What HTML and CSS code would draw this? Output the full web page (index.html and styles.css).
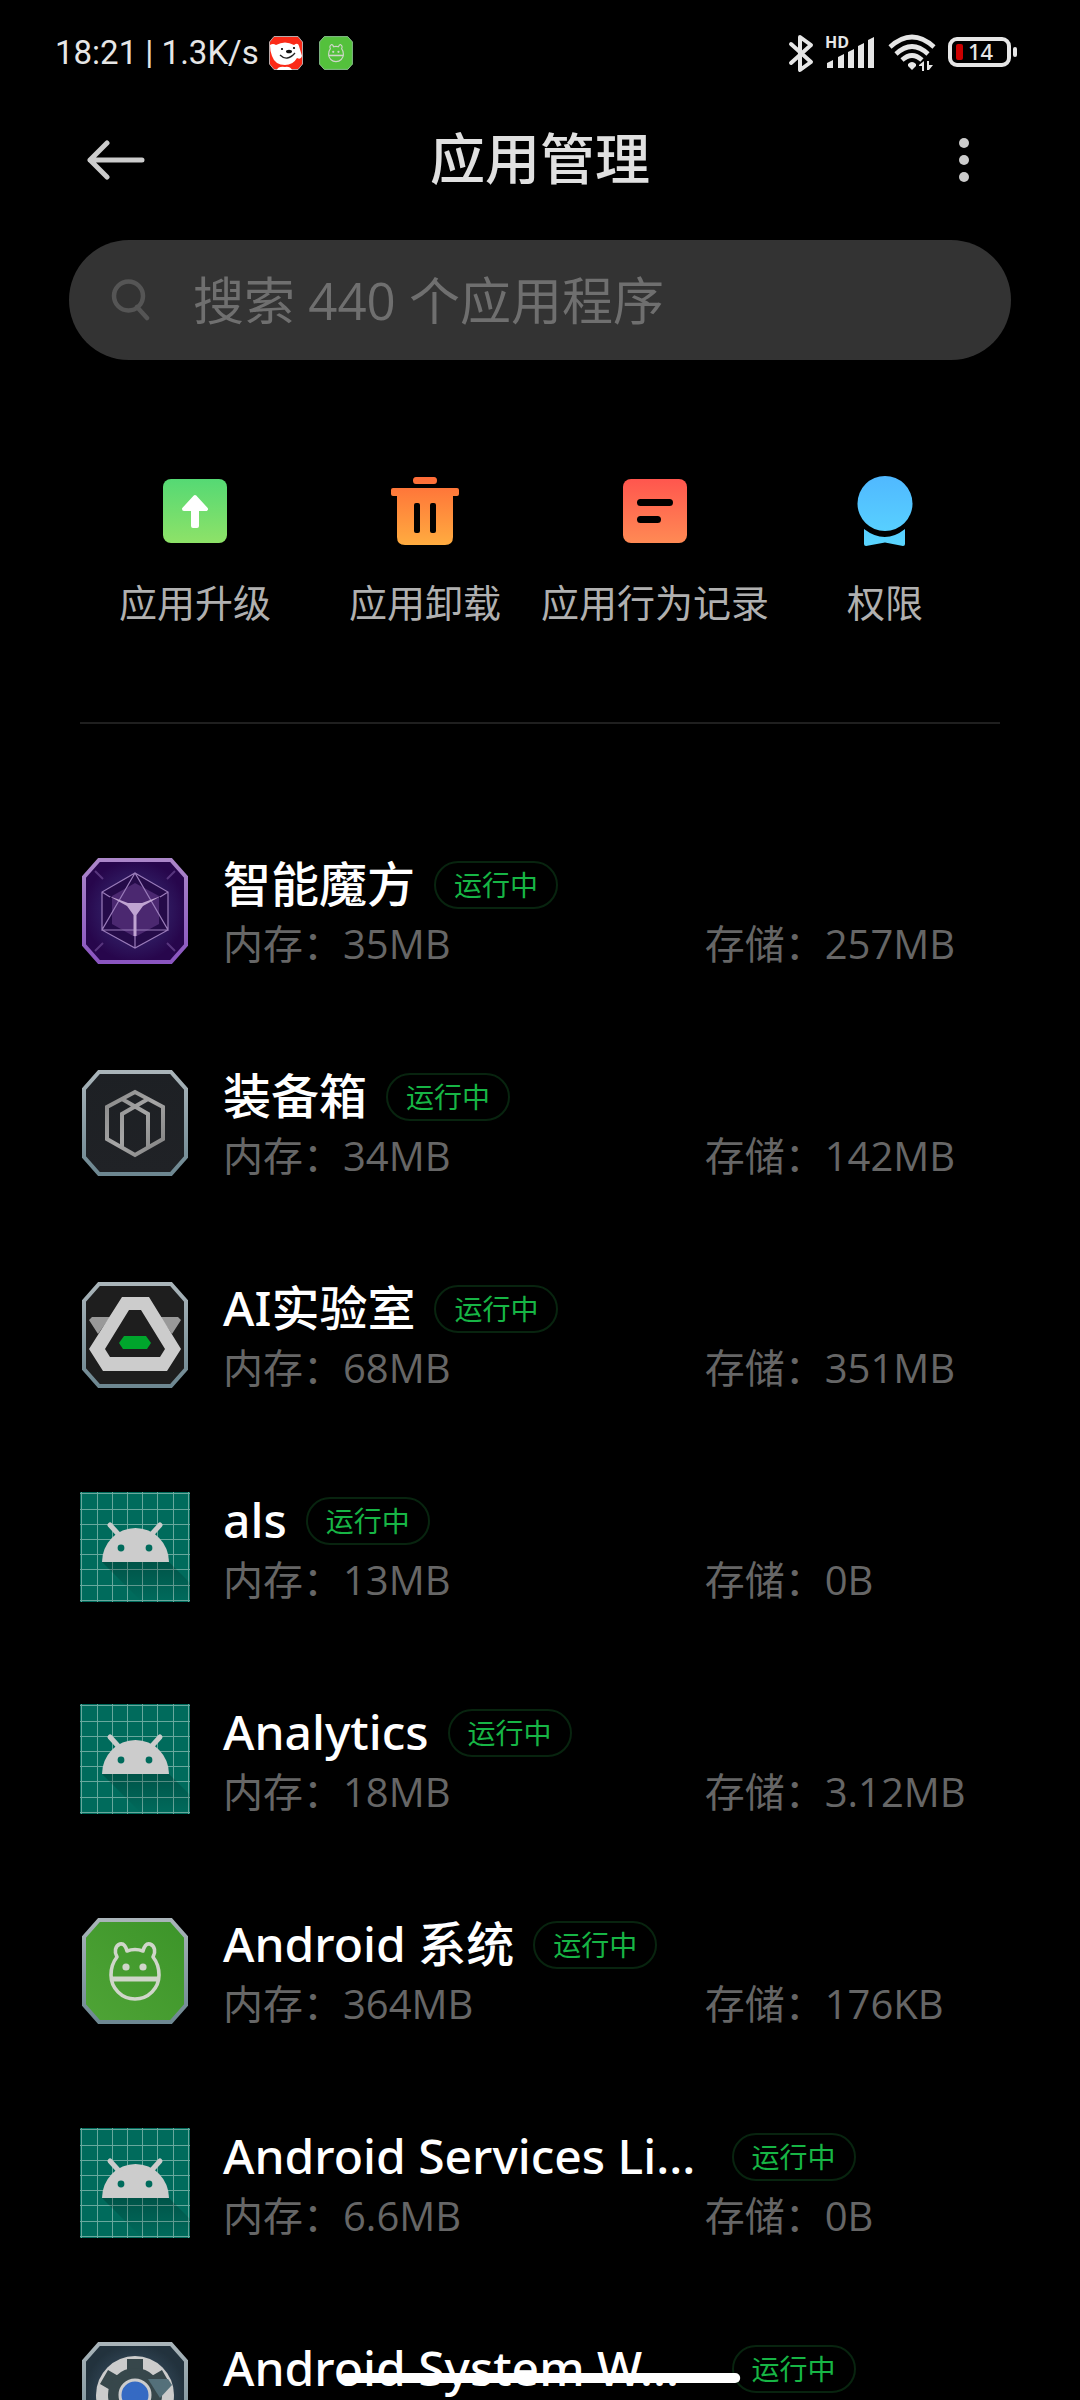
FILE: index.html
```html
<!DOCTYPE html>
<html lang="zh-CN">
<head>
	<meta charset="utf-8">
	<meta name="viewport" content="width=device-width, initial-scale=1">
	<title>应用管理</title>
	<link rel="stylesheet" href="styles.css">
</head>
<body>
	<!-- 公用图形 -->
	<svg class="defs" width="0" height="0" aria-hidden="true">
		<defs>
			<linearGradient id="frame" x1="0" y1="0" x2="0" y2="1">
				<stop offset="0" stop-color="#a9b4b9"/><stop offset="1" stop-color="#6d8791"/>
			</linearGradient>
			<linearGradient id="frame-purple" x1="0" y1="0" x2="0" y2="1">
				<stop offset="0" stop-color="#ab86c9"/><stop offset="1" stop-color="#8a55c0"/>
			</linearGradient>
			<radialGradient id="purple">
				<stop offset="0" stop-color="#3c2a78"/><stop offset="0.6" stop-color="#2f1a60"/><stop offset="1" stop-color="#27064c"/>
			</radialGradient>
			<radialGradient id="slate">
				<stop offset="0" stop-color="#466078"/><stop offset="1" stop-color="#22323d"/>
			</radialGradient>
			<linearGradient id="steel" x1="0" y1="0" x2="1" y2="1">
				<stop offset="0" stop-color="#888"/><stop offset="0.5" stop-color="#a6a6a6"/><stop offset="1" stop-color="#808080"/>
			</linearGradient>
			<linearGradient id="dark" x1="0" y1="0" x2="0" y2="1">
				<stop offset="0" stop-color="#1d2024"/><stop offset="1" stop-color="#202226"/>
			</linearGradient>
			<linearGradient id="leaf" x1="1" y1="0" x2="0" y2="1">
				<stop offset="0" stop-color="#3c9429"/><stop offset="1" stop-color="#4fa436"/>
			</linearGradient>
			<linearGradient id="shade" x1="0" y1="0" x2="0" y2="1">
				<stop offset="0" stop-color="#000" stop-opacity="0.22"/><stop offset="1" stop-color="#000" stop-opacity="0"/>
			</linearGradient>
			<linearGradient id="green" x1="0" y1="0" x2="0" y2="1">
				<stop offset="0" stop-color="#55d974"/><stop offset="1" stop-color="#8ee268"/>
			</linearGradient>
			<linearGradient id="orange" x1="0" y1="0" x2="0" y2="1">
				<stop offset="0" stop-color="#ff6c38"/><stop offset="1" stop-color="#ffac40"/>
			</linearGradient>
			<linearGradient id="red" x1="0" y1="0" x2="0" y2="1">
				<stop offset="0" stop-color="#ff564e"/><stop offset="1" stop-color="#ff8a54"/>
			</linearGradient>
			<linearGradient id="blue" gradientUnits="userSpaceOnUse" x1="0" y1="0" x2="0" y2="72">
				<stop offset="0" stop-color="#50b8ff"/><stop offset="1" stop-color="#5ad6ff"/>
			</linearGradient>
		</defs>
		<symbol id="octagon" viewBox="0 0 110 110">
			<path d="M19 4H91L106 21V89L91 106H19L4 89V21Z" stroke-width="4"/>
		</symbol>
		<symbol id="robot" viewBox="0 0 110 110">
			<path fill="#006b5c" d="M0 0H110V110H0Z"/>
			<path stroke="#68a89d" stroke-width="1" d="M1.5 0V110M17.5 0V110M32.5 0V110M47.5 0V110M62.5 0V110M77.5 0V110M93.5 0V110M108.5 0V110M0 1.5H110M0 17.5H110M0 32.5H110M0 47.5H110M0 62.5H110M0 77.5H110M0 93.5H110M0 108.5H110"/>
			<path fill="url(#shade)" d="M22 70H89L110 91V110H62Z"/>
			<path fill="#ccc" d="M22 70A33.5 34 0 0 1 89 70Z"/>
			<path stroke="#ccc" stroke-width="5" stroke-linecap="round" d="M30 33L40 44M80 33L70 44"/>
			<circle cx="41" cy="56" r="3.4" fill="#006b5c"/>
			<circle cx="69" cy="56" r="3.4" fill="#006b5c"/>
		</symbol>
		<symbol id="bugdroid" viewBox="0 0 110 110">
			<g fill="none" stroke="#d0d6ca" stroke-width="3.6" stroke-linejoin="round">
				<path d="M37 41C34 36 35 30 40 28C44 27 46 31 47 35Q55 32 63 35C64 31 66 27 70 28C75 30 76 36 73 41C77 46 79 52 79 59A24 24 0 0 1 31 59C31 52 33 46 37 41Z"/>
				<path stroke-width="5" d="M31 63H79"/>
			</g>
			<circle cx="46" cy="51" r="3.6" fill="#d0d6ca"/>
			<circle cx="63" cy="51" r="3.6" fill="#d0d6ca"/>
		</symbol>
	</svg>

	<div class="screen">
		<div class="status">
			<span class="clock">18:21 | 1.3K/s</span>
			<svg class="note-icon" viewBox="0 0 34 34">
				<path fill="#fb2a17" stroke="#b9a9a9" d="M5 .5H29L33.5 6V28L29 33.5H5L.5 28V6Z"/>
				<path fill="#fff" d="M1 9Q4 7 7 9Q16 4 25 9Q29 6 30 10L33 20Q32 24 28 22Q24 29 16 29Q6 29 3 20Q1 15 1 9ZM8 34Q9 30 16 31Q21 30 23 34Z"/>
				<path fill="none" stroke="#222" stroke-width="1.3" d="M11 19Q18 26 26 17"/>
				<ellipse cx="20" cy="15.5" rx="3" ry="1.8" fill="#111"/>
				<circle cx="13" cy="13" r="1.1"/><circle cx="25" cy="12" r="1.1"/>
			</svg>
			<svg class="note-icon note-gap" viewBox="0 0 110 110">
				<path fill="#54c13c" stroke="#8fc795" stroke-width="3" d="M17 2H93L108 19V91L93 108H17L2 91V19Z"/>
				<use href="#bugdroid"/>
			</svg>
			<span class="space"></span>
			<svg width="26" height="40" viewBox="0 0 26 40">
				<path fill="none" stroke="#e6e6e6" stroke-width="4" stroke-linejoin="round" stroke-linecap="round" d="M3 11L23 29L12 37V4L23 12L3 30"/>
			</svg>
			<svg class="signal" width="54" height="48" viewBox="0 0 54 48">
				<text x="1" y="19" class="hd">HD</text>
				<path fill="#e6e6e6" d="M3 39V34L9 31V39ZM14 39V28L20 25V39ZM24 39V23L30 20V39ZM34 39V17L40 14V39ZM44 39V11L50 8V39Z"/>
			</svg>
			<svg class="wifi" width="48" height="40" viewBox="0 0 48 40">
				<g fill="none" stroke="#e6e6e6" stroke-width="4.6">
					<path d="M2 14Q24 -6 46 14M8 21Q24 6 40 21M14 27Q24 18 34 27"/>
				</g>
				<path fill="#e6e6e6" d="M20 31Q24 27 28 31V33L24 37L20 33ZM31 32L36 28V38H34V33H31ZM39 28H41V32H45L41 37H39Z"/>
			</svg>
			<svg class="battery" width="70" height="40" viewBox="0 0 70 40">
				<rect x="2" y="6" width="59" height="26" rx="7" fill="none" stroke="#e6e6e6" stroke-width="4"/>
				<rect x="65" y="14" width="4" height="10" rx="2" fill="#e6e6e6"/>
				<rect x="8" y="11" width="7" height="16" rx="2" fill="#c00"/>
				<text x="20" y="27" class="level">14</text>
			</svg>
		</div>

		<header class="bar">
			<button class="bar-btn" type="button" aria-label="返回">
				<svg width="60" height="40" viewBox="0 0 60 40">
					<path fill="none" stroke="#ccc" stroke-width="5" stroke-linecap="round" stroke-linejoin="round" d="M21 3L4 20L21 37M4 20H56"/>
				</svg>
			</button>
			<h1>应用管理</h1>
			<button class="bar-btn bar-more" type="button" aria-label="更多">
				<svg width="12" height="44" viewBox="0 0 12 44">
					<g fill="#ccc"><circle cx="6" cy="5" r="5"/><circle cx="6" cy="22" r="5"/><circle cx="6" cy="39" r="5"/></g>
				</svg>
			</button>
		</header>

		<label class="search">
			<svg width="40" height="42" viewBox="0 0 40 42">
				<path fill="none" stroke="#555" stroke-width="4.5" stroke-linecap="round" d="M26 28L36 39M32 17A14.5 14.5 0 1 1 3 17A14.5 14.5 0 1 1 32 17Z"/>
			</svg>
			<input type="text" placeholder="搜索 440 个应用程序" aria-label="搜索应用程序">
		</label>

		<nav class="actions">
			<a href="#">
				<svg viewBox="0 0 72 72">
					<rect x="4" y="4" width="64" height="64" rx="8" fill="url(#green)"/>
					<path fill="#fff" stroke="#fff" stroke-width="4" stroke-linejoin="round" d="M36 22L47 34H38V51H34V34H25Z"/>
				</svg>
				<span>应用升级</span>
			</a>
			<a href="#">
				<svg viewBox="0 0 72 72">
					<path fill="url(#orange)" fill-rule="evenodd" d="M27 2H45Q48 2 48 5.5Q48 9 45 9H27Q24 9 24 5.5Q24 2 27 2ZM4 13H68Q70 13 70 15V19Q70 21 68 21H64V62Q64 70 56 70H16Q8 70 8 62V21H4Q2 21 2 19V15Q2 13 4 13ZM25 30V56Q25 58 27 58H29Q31 58 31 56V30Q31 28 29 28H27Q25 28 25 30ZM41 30V56Q41 58 43 58H45Q47 58 47 56V30Q47 28 45 28H43Q41 28 41 30Z"/>
				</svg>
				<span>应用卸载</span>
			</a>
			<a href="#">
				<svg viewBox="0 0 72 72">
					<rect x="4" y="4" width="64" height="64" rx="8" fill="url(#red)"/>
					<path stroke="#000" stroke-width="7" stroke-linecap="round" d="M21.5 27.5H50.5M21.5 44.5H38.5"/>
				</svg>
				<span>应用行为记录</span>
			</a>
			<a href="#">
				<svg viewBox="0 0 72 72">
					<circle cx="36" cy="28.5" r="27.5" fill="url(#blue)"/>
					<path fill="url(#blue)" d="M15 54Q36 70 56 54V69Q56 71 54 71L36 67.5L17 71Q15 71 15 69Z"/>
				</svg>
				<span>权限</span>
			</a>
		</nav>

		<ul class="apps">
			<li>
				<svg class="app-icon" viewBox="0 0 110 110">
					<use href="#octagon" fill="url(#purple)" stroke="url(#frame-purple)"/>
					<path fill="#250b49" d="M55 17L88 36V74L55 92L22 74V36Z"/>
					<path fill="#4b2870" d="M55 27L79 40V68L55 81L32 68V40Z"/>
					<path fill="none" stroke="#9a7cba" stroke-width="1.2" d="M55 17L88 36V74L55 92L22 74V36ZM55 17L22 74H88ZM22 36L30 41M88 36L80 41M55 80V92"/>
					<path fill="#c0a4d2" d="M29 40L48 47H62L81 40L63 50L56.5 59V80H53.5V59L47 50Z"/>
					<path stroke="#57357d" stroke-width="2" d="M15 15L23 23M95 15L87 23M15 95L23 87M95 95L87 87"/>
				</svg>
				<div class="info">
					<div class="name"><h2>智能魔方</h2><span class="badge">运行中</span></div>
					<p class="usage"><span>内存：35MB</span><span>存储：257MB</span></p>
				</div>
			</li>
			<li>
				<svg class="app-icon" viewBox="0 0 110 110">
					<use href="#octagon" fill="url(#dark)" stroke="url(#frame)"/>
					<path fill="none" stroke="url(#steel)" stroke-width="4" d="M55 24L83 39V71L55 87L27 71V39ZM42 31L68 46V79M68 31L42 46V79"/>
				</svg>
				<div class="info">
					<div class="name"><h2>装备箱</h2><span class="badge">运行中</span></div>
					<p class="usage"><span>内存：34MB</span><span>存储：142MB</span></p>
				</div>
			</li>
			<li>
				<svg class="app-icon" viewBox="0 0 110 110">
					<use href="#octagon" fill="#1e1e1e" stroke="url(#frame)"/>
					<path fill="#999" d="M9 40L12 37H30L18 54ZM101 40L98 37H80L92 54Z"/>
					<path fill="#ccc" fill-rule="evenodd" d="M42 17H69L101 69L87 91H23L9 69ZM49 30L25 69L30 77H80L85 69L61 30Z"/>
					<path fill="#00a52c" d="M44 56H66L71 63L67 69H43L39 63Z"/>
				</svg>
				<div class="info">
					<div class="name"><h2>AI实验室</h2><span class="badge">运行中</span></div>
					<p class="usage"><span>内存：68MB</span><span>存储：351MB</span></p>
				</div>
			</li>
			<li>
				<svg class="app-icon" viewBox="0 0 110 110"><use href="#robot"/></svg>
				<div class="info">
					<div class="name"><h2>als</h2><span class="badge">运行中</span></div>
					<p class="usage"><span>内存：13MB</span><span>存储：0B</span></p>
				</div>
			</li>
			<li>
				<svg class="app-icon" viewBox="0 0 110 110"><use href="#robot"/></svg>
				<div class="info">
					<div class="name"><h2>Analytics</h2><span class="badge">运行中</span></div>
					<p class="usage"><span>内存：18MB</span><span>存储：3.12MB</span></p>
				</div>
			</li>
			<li>
				<svg class="app-icon" viewBox="0 0 110 110">
					<use href="#octagon" fill="url(#leaf)" stroke="url(#frame)"/>
					<use href="#bugdroid"/>
				</svg>
				<div class="info">
					<div class="name"><h2>Android 系统</h2><span class="badge">运行中</span></div>
					<p class="usage"><span>内存：364MB</span><span>存储：176KB</span></p>
				</div>
			</li>
			<li>
				<svg class="app-icon" viewBox="0 0 110 110"><use href="#robot"/></svg>
				<div class="info">
					<div class="name"><h2 class="cut">Android Services Li...</h2><span class="badge">运行中</span></div>
					<p class="usage"><span>内存：6.6MB</span><span>存储：0B</span></p>
				</div>
			</li>
			<li>
				<svg class="app-icon" viewBox="0 0 110 110">
					<use href="#octagon" fill="url(#slate)" stroke="url(#frame)"/>
					<circle cx="55" cy="55" r="39" fill="#ccc"/>
					<path stroke="#37474b" stroke-width="16" d="M55 19V91M24 37L86 73M86 37L24 73"/>
					<circle cx="55" cy="55" r="27" fill="#37474b"/>
					<path fill="#54707a" d="M68 39H88L92 45L80 58Z"/>
					<circle cx="55" cy="55" r="15" fill="#356ac3" stroke="#ccc" stroke-width="3"/>
				</svg>
				<div class="info">
					<div class="name"><h2 class="cut">Android System W...</h2><span class="badge">运行中</span></div>
				</div>
			</li>
		</ul>
	</div>
	<div class="home-bar"></div>
</body>
</html>
```

FILE: styles.css
```css
*{
	box-sizing: border-box;
	margin: 0;
	padding: 0;
}
body{
	background-color: #000;
	color: #fff;
	font-family: "Open Sans", "Noto Sans CJK SC", sans-serif;
}
svg{
	display: block;
	flex: none;
}
.defs{
	position: absolute;
}
.screen{
	height: 100vh;
	overflow: hidden;
}
/*状态栏*/
.status{
	display: flex;
	align-items: center;
	height: 106px;
	padding: 0 62px 0 55px;
	color: #e6e6e6;
}
.clock{
	font-family: Roboto, sans-serif;
	font-size: 33px;
	line-height: 40px;
	margin-right: 10px;
}
.note-icon{
	width: 34px;
	height: 34px;
}
.note-gap{
	margin-left: 16px;
}
.space{
	flex: 1;
}
.signal{
	margin-left: 10px;
}
.wifi{
	margin-left: 10px;
}
.battery{
	margin-left: 12px;
}
.hd{
	font: bold 16px "Open Sans", sans-serif;
	fill: #e6e6e6;
}
.level{
	font: 500 22px "Noto Sans", sans-serif;
	fill: #e6e6e6;
}
/*标题*/
.bar{
	display: flex;
	align-items: center;
	height: 108px;
	padding: 0 86px;
}
.bar h1{
	flex: 1;
	padding-bottom: 4px;
	font-size: 55px;
	font-weight: 500;
	line-height: 80px;
	text-align: center;
	color: #e0e0e0;
}
.bar-btn{
	display: flex;
	justify-content: flex-start;
	width: 60px;
	background: none;
	border: 0;
}
.bar-more{
	justify-content: center;
}
/*搜索*/
.search{
	display: flex;
	align-items: center;
	height: 120px;
	margin: 26px 69px 0;
	padding: 0 42px;
	border-radius: 60px;
	background-color: #333;
}
.search input{
	flex: 1;
	min-width: 0;
	margin-left: 42px;
	border: 0;
	outline: 0;
	background: none;
	color: #ccc;
	font-family: inherit;
	font-size: 51px;
	line-height: 72px;
}
.search input::placeholder{
	color: #6f6f6f;
	opacity: 1;
}
/*四个入口*/
.actions{
	display: grid;
	grid-template-columns: repeat(4, 1fr);
	margin: 0 80px;
	padding: 115px 0 92px;
	border-bottom: 2px solid #1f1f1f;
}
.actions a{
	display: flex;
	flex-direction: column;
	align-items: center;
	gap: 27px;
	color: #b0b0b0;
	text-decoration: none;
	font-size: 38px;
	line-height: 56px;
	white-space: nowrap;
}
.actions svg{
	width: 72px;
	height: 72px;
}
/*应用列表*/
.apps{
	list-style: none;
	padding: 132px 80px 0;
}
.apps li{
	display: flex;
	height: 212px;
}
.app-icon{
	width: 110px;
	height: 110px;
	margin-right: 33px;
}
.info{
	flex: 1;
	min-width: 0;
}
.name{
	display: flex;
	align-items: flex-end;
	height: 56px;
}
.name h2{
	font-family: "Noto Sans", "Noto Sans CJK SC", sans-serif;
	font-size: 48px;
	font-weight: 500;
	line-height: 56px;
	white-space: nowrap;
}
.name .cut{
	width: 63%;
}
.badge{
	height: 48px;
	margin: 0 0 3px 19px;
	padding: 0 18px;
	border: 2px solid #08240f;
	border-radius: 24px;
	color: #17b545;
	font-size: 28px;
	line-height: 44px;
	white-space: nowrap;
}
.usage{
	display: flex;
	color: #666;
	font-size: 40px;
	line-height: 64px;
}
.usage span:first-child{
	width: 62%;
}
/*底部手势条*/
.home-bar{
	position: fixed;
	left: 50%;
	bottom: 17px;
	width: 37%;
	height: 10px;
	border-radius: 5px;
	background-color: #fff;
	transform: translateX(-50%);
}
```
